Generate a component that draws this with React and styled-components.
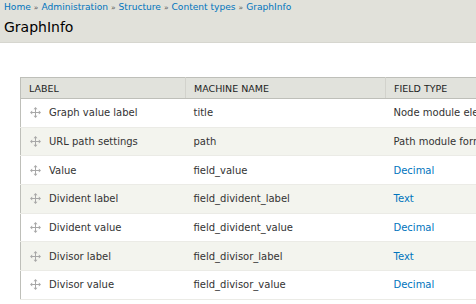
import styled, { createGlobalStyle } from "styled-components";

const GlobalStyle = createGlobalStyle`
  html, body {
    margin: 0;
    padding: 0;
    background: #fff;
    overflow: hidden;
  }
  body {
    font-family: "DejaVu Sans", "Liberation Sans", sans-serif;
    color: #333;
  }
`;

const fields = [
  { label: "Graph value label", name: "title", type: "Node module element", link: false },
  { label: "URL path settings", name: "path", type: "Path module form elements", link: false },
  { label: "Value", name: "field_value", type: "Decimal", link: true },
  { label: "Divident label", name: "field_divident_label", type: "Text", link: true },
  { label: "Divident value", name: "field_divident_value", type: "Decimal", link: true },
  { label: "Divisor label", name: "field_divisor_label", type: "Text", link: true },
  { label: "Divisor value", name: "field_divisor_value", type: "Decimal", link: true },
];

const crumbs = ["Home", "Administration", "Structure", "Content types", "GraphInfo"];

function DragHandle() {
  return (
    <Handle width="11" height="11" viewBox="0 0 11 11">
      <g fill="#a8a8a8">
        <rect x="5" y="1.5" width="1" height="8" />
        <rect x="1.5" y="5" width="8" height="1" />
        <polygon points="5.5,0 3.5,2.2 7.5,2.2" />
        <polygon points="5.5,11 3.5,8.8 7.5,8.8" />
        <polygon points="0,5.5 2.2,3.5 2.2,7.5" />
        <polygon points="11,5.5 8.8,3.5 8.8,7.5" />
      </g>
    </Handle>
  );
}

export default function App() {
  return (
    <Page>
      <GlobalStyle />
      <Header>
        <Breadcrumb>
          {crumbs.map((c, i) => (
            <span key={c}>
              {i > 0 && <Sep>»</Sep>}
              <Crumb href="#">{c}</Crumb>
            </span>
          ))}
        </Breadcrumb>
        <Title>GraphInfo</Title>
      </Header>
      <Content>
        <Table>
          <thead>
            <tr>
              <Th $w={165}>Label</Th>
              <Th $w={200}>Machine name</Th>
              <Th $w={200}>Field type</Th>
            </tr>
          </thead>
          <tbody>
            {fields.map((f, i) => (
              <Row key={f.name} $even={i % 2 === 1}>
                <Td>
                  <LabelCell>
                    <DragHandle />
                    {f.label}
                  </LabelCell>
                </Td>
                <Td>{f.name}</Td>
                <Td>{f.link ? <TypeLink href="#">{f.type}</TypeLink> : f.type}</Td>
              </Row>
            ))}
          </tbody>
        </Table>
      </Content>
    </Page>
  );
}

const Page = styled.div`
  width: 476px;
  height: 304px;
  overflow: hidden;
`;

const Header = styled.div`
  background: #e1e1da;
  border-bottom: 1px solid #d6d6cf;
  padding: 1px 4px 0;
  height: 41px;
`;

const Breadcrumb = styled.div`
  font-size: 9.1px;
  line-height: 13px;
  white-space: nowrap;
`;

const Sep = styled.span`
  color: #555;
  margin: 0 3px;
  font-size: 7.5px;
`;

const Crumb = styled.a`
  color: #0074bd;
  text-decoration: none;
`;

const Title = styled.h1`
  margin: 4px 0 0;
  font-size: 14px;
  font-weight: normal;
  color: #000;
  line-height: 18px;
`;

const Content = styled.div`
  padding: 34px 0 0 20px;
`;

const Table = styled.table`
  border-collapse: collapse;
  table-layout: fixed;
  width: 565px;
  font-size: 10px;
  border: 1px solid #bebfb9;
`;

const Th = styled.th`
  width: ${(p) => p.$w}px;
  box-sizing: border-box;
  background: #e1e2dc;
  border: 1px solid #bebfb9;
  border-right: 1px solid #d2d2cc;
  text-align: left;
  text-transform: uppercase;
  font-weight: normal;
  font-size: 9.5px;
  color: #222;
  padding: 0 8px;
  height: 21px;
`;

const Row = styled.tr`
  background: ${(p) => (p.$even ? "#f3f4ee" : "#fff")};
  border-bottom: 1px solid #ebebe6;
`;

const Td = styled.td`
  height: 27.7px;
  padding: 0 8px;
  color: #333;
  white-space: nowrap;
  overflow: hidden;
`;

const LabelCell = styled.div`
  display: flex;
  align-items: center;
  gap: 8px;
`;

const Handle = styled.svg`
  margin-left: 1px;
  flex: none;
`;

const TypeLink = styled.a`
  color: #0074bd;
  text-decoration: none;
`;
